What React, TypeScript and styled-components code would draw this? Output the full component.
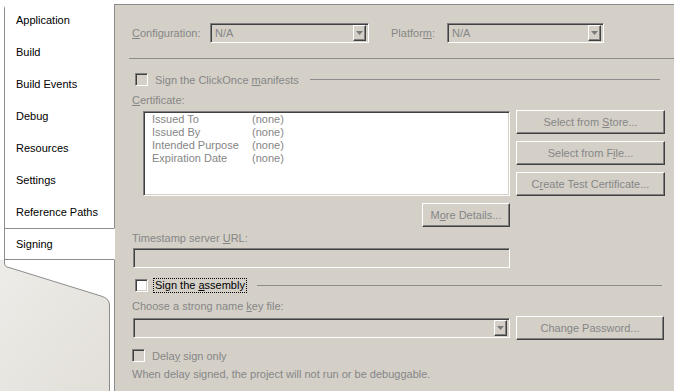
import React from 'react';
import styled, { createGlobalStyle } from 'styled-components';

const GlobalStyle = createGlobalStyle`
  html, body {
    margin: 0;
    padding: 0;
    background: #fff;
  }
  body {
    font-family: "Liberation Sans", Arial, sans-serif;
    font-size: 11px;
  }
`;

const lineGray = '#8c8c8c';
const textGray = '#868686';
const face = '#d4d0c8';

const Page = styled.div`
  display: flex;
  width: 674px;
  height: 391px;
  overflow: hidden;
  background: #fff;
`;

const Sidebar = styled.div`
  width: 115px;
  flex: none;
  display: flex;
  flex-direction: column;
  padding-top: 4px;
  box-sizing: border-box;
`;

const TabList = styled.div`
  margin-left: 4px;
  border-left: 1px solid ${lineGray};
  border-top-left-radius: 5px;
  display: flex;
  flex-direction: column;
`;

const Tab = styled.div<{ $active?: boolean }>`
  height: 32px;
  box-sizing: border-box;
  display: flex;
  align-items: center;
  padding-left: 11px;
  color: #000;
  background: #fff;
  border-right: ${({ $active }) => ($active ? '1px solid #fff' : `1px solid ${lineGray}`)};
  border-top: ${({ $active }) => ($active ? `1px solid ${lineGray}` : 'none')};
  border-bottom: ${({ $active }) => ($active ? `1px solid ${lineGray}` : 'none')};
`;

const Tail = styled.div`
  flex: 1;
  svg {
    display: block;
  }
`;

const Panel = styled.div`
  flex: 1;
  margin-top: 4px;
  background: ${face};
  border-top: 1px solid ${lineGray};
  padding-left: 17px;
  display: flex;
  flex-direction: column;
  color: ${textGray};
`;

const Row = styled.div<{ $top: number; $h?: number }>`
  display: flex;
  align-items: center;
  margin-top: ${({ $top }) => $top}px;
  height: ${({ $h }) => ($h ? `${$h}px` : 'auto')};
`;

const Label = styled.span<{ $w?: number; $gap?: number }>`
  width: ${({ $w }) => ($w ? `${$w}px` : 'auto')};
  margin-left: ${({ $gap }) => $gap ?? 0}px;
  flex: none;
  white-space: nowrap;
`;

const FieldLabel = styled.div<{ $top: number }>`
  margin-top: ${({ $top }) => $top}px;
  line-height: 14px;
  white-space: nowrap;
`;

const Separator = styled.div`
  margin-top: 15px;
  margin-left: -3px;
  height: 1px;
  background: ${lineGray};
`;

const GroupLine = styled.div<{ $gap: number; $right: number }>`
  flex: 1;
  height: 1px;
  background: ${lineGray};
  margin-left: ${({ $gap }) => $gap}px;
  margin-right: ${({ $right }) => $right}px;
`;

const Sunken = styled.div<{ $w: number; $h: number; $bg?: string; $left?: number }>`
  width: ${({ $w }) => $w}px;
  height: ${({ $h }) => $h}px;
  margin-left: ${({ $left }) => $left ?? 0}px;
  box-sizing: border-box;
  flex: none;
  border: 1px solid;
  border-color: #808080 #fff #fff #808080;
  box-shadow: inset 1px 1px #404040, inset -1px -1px ${face};
  background: ${({ $bg }) => $bg ?? face};
`;

const Combo = styled(Sunken)`
  display: flex;
  align-items: center;
  padding: 2px;
  color: ${textGray};
`;

const ComboText = styled.span`
  flex: 1;
  padding-left: 2px;
`;

const DropButton = styled.span`
  width: 13px;
  height: 16px;
  box-sizing: border-box;
  flex: none;
  display: flex;
  align-items: center;
  justify-content: center;
  background: ${face};
  border: 1px solid;
  border-color: #fff #404040 #404040 #fff;
  box-shadow: inset -1px -1px #808080;
`;

const CheckBox = styled.span<{ $enabled?: boolean }>`
  width: 13px;
  height: 13px;
  box-sizing: border-box;
  flex: none;
  border: 1px solid;
  border-color: #808080 #fff #fff #808080;
  box-shadow: inset 1px 1px #404040, inset -1px -1px ${face};
  background: ${({ $enabled }) => ($enabled ? '#fff' : face)};
`;

const FocusLabel = styled.span`
  margin-left: 6px;
  padding: 0 1px;
  color: #000;
  outline: 1px dotted #000;
  outline-offset: 0;
  line-height: 13px;
  white-space: nowrap;
`;

const Button = styled.button<{ $w: number }>`
  width: ${({ $w }) => $w}px;
  height: 24px;
  flex: none;
  padding: 0;
  box-sizing: border-box;
  background: ${face};
  border: 1px solid;
  border-color: #fff #404040 #404040 #fff;
  box-shadow: inset -1px -1px #808080;
  color: ${textGray};
  font: 11px "Liberation Sans", Arial, sans-serif;
`;

const CertRow = styled.div`
  display: flex;
  align-items: flex-start;
  margin-top: 3px;
`;

const CertBox = styled(Sunken)`
  margin-top: 1px;
  padding: 1px 0 0 8px;
  display: grid;
  grid-template-columns: 100px auto;
  grid-auto-rows: 13px;
  align-content: start;
  line-height: 13px;
  color: ${textGray};
`;

const ButtonColumn = styled.div`
  margin-left: 6px;
  display: flex;
  flex-direction: column;
  gap: 7px;
`;

const RightAligned = styled.div`
  width: 378px;
  display: flex;
  justify-content: flex-end;
  margin-top: 7px;
`;

const Arrow = () => (
  <svg width="7" height="4" viewBox="0 0 7 4">
    <path d="M0 0 H7 L3.5 4 Z" fill="#7a7a7a" />
  </svg>
);

const tabs = ['Application', 'Build', 'Build Events', 'Debug', 'Resources', 'Settings', 'Reference Paths', 'Signing'];

const certFields = [
  ['Issued To', '(none)'],
  ['Issued By', '(none)'],
  ['Intended Purpose', '(none)'],
  ['Expiration Date', '(none)'],
];

export default function App() {
  return (
    <>
      <GlobalStyle />
      <Page>
        <Sidebar>
          <TabList>
            {tabs.map((t) => (
              <Tab key={t} $active={t === 'Signing'}>
                {t}
              </Tab>
            ))}
          </TabList>
          <Tail>
            <svg width="115" height="131" viewBox="0 0 115 131">
              <defs>
                <linearGradient id="tailFill" x1="0" y1="0" x2="1" y2="1">
                  <stop offset="0" stopColor="#eeece8" />
                  <stop offset="1" stopColor="#e2dfd9" />
                </linearGradient>
              </defs>
              <path d="M0 0 H4.5 V3 Q4.5 7 9 7.5 L101 36 Q109.5 38.5 109.5 45 V131 H0 Z" fill="url(#tailFill)" />
              <path d="M4.5 0 V3 Q4.5 7 9 7.5 L101 36 Q109.5 38.5 109.5 45 V131" fill="none" stroke={lineGray} />
              <line x1="114.5" y1="0" x2="114.5" y2="131" stroke={lineGray} />
            </svg>
          </Tail>
        </Sidebar>

        <Panel>
          <Row $top={18} $h={20}>
            <Label $w={78}>
              <u>C</u>onfiguration:
            </Label>
            <Combo $w={159} $h={20}>
              <ComboText>N/A</ComboText>
              <DropButton>
                <Arrow />
              </DropButton>
            </Combo>
            <Label $w={56} $gap={22}>
              Platfor<u>m</u>:
            </Label>
            <Combo $w={157} $h={20}>
              <ComboText>N/A</ComboText>
              <DropButton>
                <Arrow />
              </DropButton>
            </Combo>
          </Row>

          <Separator />

          <Row $top={14} $h={13} style={{ paddingLeft: 3 }}>
            <CheckBox />
            <Label $gap={7}>
              Sign the ClickOnce <u>m</u>anifests
            </Label>
            <GroupLine $gap={11} $right={14} />
          </Row>

          <FieldLabel $top={7}>
            <u>C</u>ertificate:
          </FieldLabel>

          <CertRow>
            <CertBox $w={367} $h={85} $bg="#fff" $left={11}>
              {certFields.map(([k, v]) => (
                <React.Fragment key={k}>
                  <span>{k}</span>
                  <span>{v}</span>
                </React.Fragment>
              ))}
            </CertBox>
            <ButtonColumn>
              <Button $w={149}>
                Select from <u>S</u>tore...
              </Button>
              <Button $w={149}>
                Select from F<u>i</u>le...
              </Button>
              <Button $w={149}>
                C<u>r</u>eate Test Certificate...
              </Button>
            </ButtonColumn>
          </CertRow>

          <RightAligned>
            <Button $w={88}>
              M<u>o</u>re Details...
            </Button>
          </RightAligned>

          <FieldLabel $top={4}>
            Timestamp server <u>U</u>RL:
          </FieldLabel>
          <Row $top={3}>
            <Sunken $w={377} $h={20} $left={1} />
          </Row>

          <Row $top={11} $h={13} style={{ paddingLeft: 3 }}>
            <CheckBox $enabled />
            <FocusLabel>
              Sign the <u>a</u>ssembly
            </FocusLabel>
            <GroupLine $gap={11} $right={12} />
          </Row>

          <FieldLabel $top={7}>
            Choose a strong name <u>k</u>ey file:
          </FieldLabel>

          <Row $top={3} $h={24}>
            <Combo $w={377} $h={20} $left={1}>
              <ComboText />
              <DropButton>
                <Arrow />
              </DropButton>
            </Combo>
            <Button $w={148} style={{ marginLeft: 6 }}>
              Chan<u>g</u>e Password...
            </Button>
          </Row>

          <Row $top={9} $h={13}>
            <CheckBox />
            <Label $gap={7}>
              Dela<u>y</u> sign only
            </Label>
          </Row>

          <FieldLabel $top={5}>When delay signed, the project will not run or be debuggable.</FieldLabel>
        </Panel>
      </Page>
    </>
  );
}
